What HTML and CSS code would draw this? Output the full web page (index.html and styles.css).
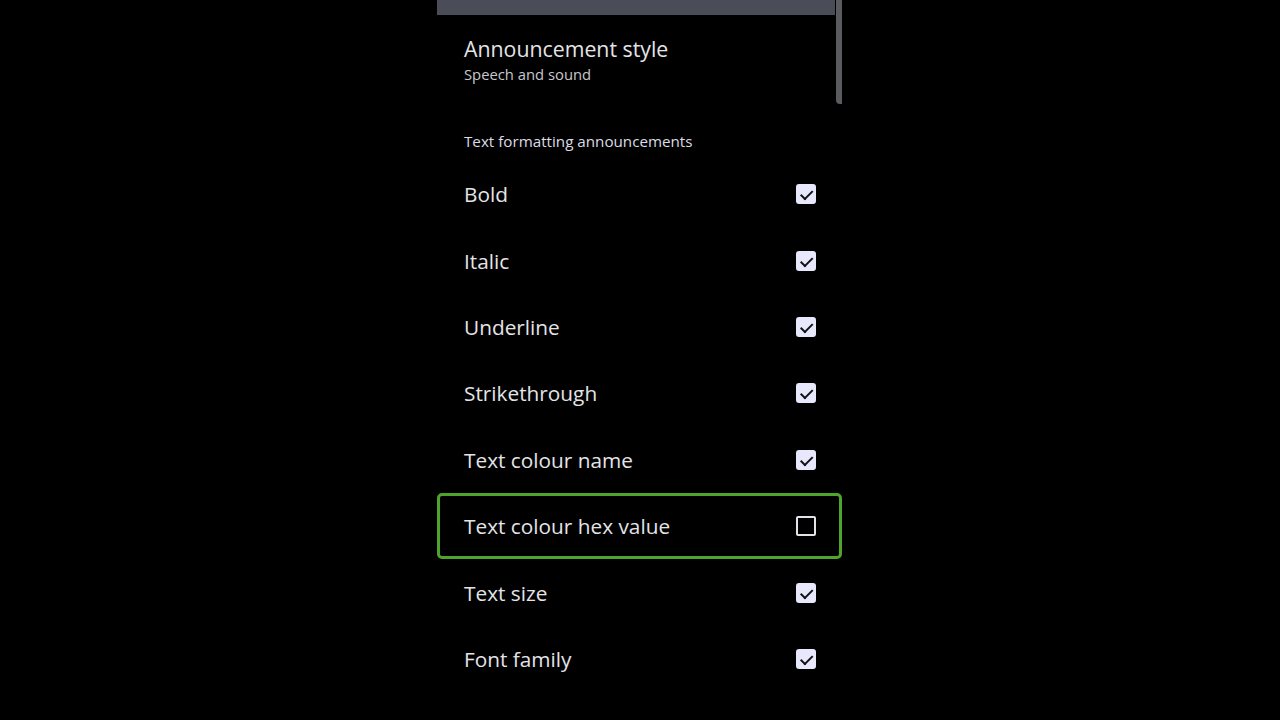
FILE: index.html
```html
<!DOCTYPE html>
<html lang="en">
<head>
    <meta charset="UTF-8">
    <meta name="viewport" content="width=device-width, initial-scale=1.0">
    <title>Text formatting announcements</title>
    <link rel="stylesheet" href="styles.css">
</head>
<body>
    <div class="screen">
        <div class="topbar"></div>
        <div class="scrollbar"></div>

        <div class="pref">
            <div class="pref-title">Announcement style</div>
            <div class="pref-summary">Speech and sound</div>
        </div>

        <div class="category">Text formatting announcements</div>

        <div class="row"><span>Bold</span><span class="box checked"></span></div>
        <div class="row"><span>Italic</span><span class="box checked"></span></div>
        <div class="row"><span>Underline</span><span class="box checked"></span></div>
        <div class="row"><span>Strikethrough</span><span class="box checked"></span></div>
        <div class="row"><span>Text colour name</span><span class="box checked"></span></div>
        <div class="row focused"><span>Text colour hex value</span><span class="box"></span></div>
        <div class="row"><span>Text size</span><span class="box checked"></span></div>
        <div class="row"><span>Font family</span><span class="box checked"></span></div>
    </div>
</body>
</html>
```

FILE: styles.css
```css
html, body {
    margin: 0;
    padding: 0;
    background: #000;
    height: 100%;
}
body {
    font-family: "Open Sans", Roboto, sans-serif;
    color: #e4e4e8;
}
.screen {
    position: relative;
    width: 405px;
    margin-left: 437px;
    height: 720px;
    overflow: hidden;
}
.screen * {
    box-sizing: border-box;
}
.topbar {
    height: 15px;
    margin-right: 7px;
    background: #4a4c57;
}
.scrollbar {
    position: absolute;
    top: 0;
    right: 0;
    width: 6px;
    height: 104px;
    background: #5a5b5e;
    border-radius: 0 0 0 4px;
}
.pref {
    padding: 20px 27px 0;
    height: 100px;
}
.pref-title {
    font-size: 21.3px;
    line-height: 28px;
}
.pref-summary {
    font-size: 14.8px;
    line-height: 20px;
    margin-top: 1px;
    color: #c8c8cc;
}
.category {
    padding: 16px 27px 0;
    font-size: 15.2px;
    font-weight: 500;
    line-height: 20px;
    height: 46px;
    color: #dcdce4;
}
.row {
    display: flex;
    align-items: center;
    justify-content: space-between;
    height: 66.4px;
    padding: 0 26px 0 27px;
    font-size: 20.8px;
}
.row.focused {
    border: 3px solid #4fa52c;
    border-radius: 5px;
    padding: 0 23px 0 24px;
    height: 66px;
    margin-bottom: 0.4px;
}
.box {
    width: 20px;
    height: 20px;
    border: 2px solid #e2e2e8;
    border-radius: 2px;
    position: relative;
}
.box.checked {
    background: #e8e8fc;
    border-color: #e8e8fc;
    border-radius: 3px;
}
.box.checked::after {
    content: "";
    position: absolute;
    left: 2px;
    top: 2px;
    width: 12px;
    height: 7px;
    border-left: 2.5px solid #111;
    border-bottom: 2.5px solid #111;
    box-sizing: border-box;
    transform: rotate(-45deg) translate(-1px, 2px);
}
```
